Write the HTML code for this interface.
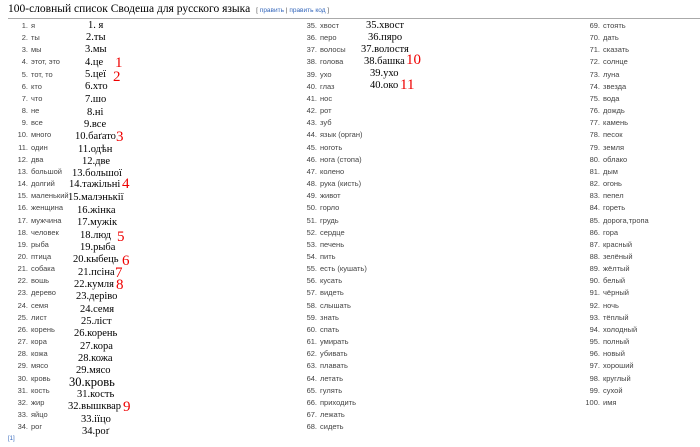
<!DOCTYPE html>
<html><head><meta charset="utf-8"><style>
body{margin:0;width:700px;height:447px;background:#fff;position:relative;overflow:hidden;font-family:"Liberation Sans",sans-serif}
h2{position:absolute;left:8px;top:3px;margin:0;font:11.5px "Liberation Serif",serif;color:#000;white-space:nowrap}
h2 span{font:6.5px "Liberation Sans",sans-serif;color:#555;margin-left:6px}
h2 span a{color:#3366bb}
.rule{position:absolute;left:8px;right:0;top:18px;height:1px;background:#aaa}
.l{position:absolute;font-size:7.5px;color:#444;line-height:12.15px;white-space:nowrap}
.l b{font-weight:normal;display:inline-block;text-align:right;margin-right:3px}
.h{position:absolute;font:10.5px "Liberation Serif",serif;color:#000;line-height:14px;white-space:nowrap}
.r{position:absolute;font:15px "Liberation Serif",serif;color:#e00;line-height:14px}
.f{position:absolute;left:8px;top:436px;font-size:6px;color:#3366bb}
</style></head><body>
<h2>100-словный список Сводеша для русского языка<span>[ <a>править</a> | <a>править код</a> ]</span></h2>
<div class="rule"></div>
<div class="l" style="left:10px;top:20px">
<div><b style="width:18px">1.</b>я</div><div><b style="width:18px">2.</b>ты</div><div><b style="width:18px">3.</b>мы</div><div><b style="width:18px">4.</b>этот, это</div><div><b style="width:18px">5.</b>тот, то</div><div><b style="width:18px">6.</b>кто</div><div><b style="width:18px">7.</b>что</div><div><b style="width:18px">8.</b>не</div><div><b style="width:18px">9.</b>все</div><div><b style="width:18px">10.</b>много</div><div><b style="width:18px">11.</b>один</div><div><b style="width:18px">12.</b>два</div><div><b style="width:18px">13.</b>большой</div><div><b style="width:18px">14.</b>долгий</div><div><b style="width:18px">15.</b>маленький</div><div><b style="width:18px">16.</b>женщина</div><div><b style="width:18px">17.</b>мужчина</div><div><b style="width:18px">18.</b>человек</div><div><b style="width:18px">19.</b>рыба</div><div><b style="width:18px">20.</b>птица</div><div><b style="width:18px">21.</b>собака</div><div><b style="width:18px">22.</b>вошь</div><div><b style="width:18px">23.</b>дерево</div><div><b style="width:18px">24.</b>семя</div><div><b style="width:18px">25.</b>лист</div><div><b style="width:18px">26.</b>корень</div><div><b style="width:18px">27.</b>кора</div><div><b style="width:18px">28.</b>кожа</div><div><b style="width:18px">29.</b>мясо</div><div><b style="width:18px">30.</b>кровь</div><div><b style="width:18px">31.</b>кость</div><div><b style="width:18px">32.</b>жир</div><div><b style="width:18px">33.</b>яйцо</div><div><b style="width:18px">34.</b>рог</div>
</div>
<div class="l" style="left:295px;top:20px">
<div><b style="width:22px">35.</b>хвост</div><div><b style="width:22px">36.</b>перо</div><div><b style="width:22px">37.</b>волосы</div><div><b style="width:22px">38.</b>голова</div><div><b style="width:22px">39.</b>ухо</div><div><b style="width:22px">40.</b>глаз</div><div><b style="width:22px">41.</b>нос</div><div><b style="width:22px">42.</b>рот</div><div><b style="width:22px">43.</b>зуб</div><div><b style="width:22px">44.</b>язык (орган)</div><div><b style="width:22px">45.</b>ноготь</div><div><b style="width:22px">46.</b>нога (стопа)</div><div><b style="width:22px">47.</b>колено</div><div><b style="width:22px">48.</b>рука (кисть)</div><div><b style="width:22px">49.</b>живот</div><div><b style="width:22px">50.</b>горло</div><div><b style="width:22px">51.</b>грудь</div><div><b style="width:22px">52.</b>сердце</div><div><b style="width:22px">53.</b>печень</div><div><b style="width:22px">54.</b>пить</div><div><b style="width:22px">55.</b>есть (кушать)</div><div><b style="width:22px">56.</b>кусать</div><div><b style="width:22px">57.</b>видеть</div><div><b style="width:22px">58.</b>слышать</div><div><b style="width:22px">59.</b>знать</div><div><b style="width:22px">60.</b>спать</div><div><b style="width:22px">61.</b>умирать</div><div><b style="width:22px">62.</b>убивать</div><div><b style="width:22px">63.</b>плавать</div><div><b style="width:22px">64.</b>летать</div><div><b style="width:22px">65.</b>гулять</div><div><b style="width:22px">66.</b>приходить</div><div><b style="width:22px">67.</b>лежать</div><div><b style="width:22px">68.</b>сидеть</div>
</div>
<div class="l" style="left:578px;top:20px">
<div><b style="width:22px">69.</b>стоять</div><div><b style="width:22px">70.</b>дать</div><div><b style="width:22px">71.</b>сказать</div><div><b style="width:22px">72.</b>солнце</div><div><b style="width:22px">73.</b>луна</div><div><b style="width:22px">74.</b>звезда</div><div><b style="width:22px">75.</b>вода</div><div><b style="width:22px">76.</b>дождь</div><div><b style="width:22px">77.</b>камень</div><div><b style="width:22px">78.</b>песок</div><div><b style="width:22px">79.</b>земля</div><div><b style="width:22px">80.</b>облако</div><div><b style="width:22px">81.</b>дым</div><div><b style="width:22px">82.</b>огонь</div><div><b style="width:22px">83.</b>пепел</div><div><b style="width:22px">84.</b>гореть</div><div><b style="width:22px">85.</b>дорога,тропа</div><div><b style="width:22px">86.</b>гора</div><div><b style="width:22px">87.</b>красный</div><div><b style="width:22px">88.</b>зелёный</div><div><b style="width:22px">89.</b>жёлтый</div><div><b style="width:22px">90.</b>белый</div><div><b style="width:22px">91.</b>чёрный</div><div><b style="width:22px">92.</b>ночь</div><div><b style="width:22px">93.</b>тёплый</div><div><b style="width:22px">94.</b>холодный</div><div><b style="width:22px">95.</b>полный</div><div><b style="width:22px">96.</b>новый</div><div><b style="width:22px">97.</b>хороший</div><div><b style="width:22px">98.</b>круглый</div><div><b style="width:22px">99.</b>сухой</div><div><b style="width:22px">100.</b>имя</div>
</div>
<div class="h" style="left:88px;top:19px">1. я</div>
<div class="h" style="left:86px;top:31px">2.ты</div>
<div class="h" style="left:85px;top:43px">3.мы</div>
<div class="h" style="left:85px;top:56px">4.це</div>
<div class="h" style="left:85px;top:68px">5.цеї</div>
<div class="h" style="left:85px;top:80px">6.хто</div>
<div class="h" style="left:85px;top:93px">7.шо</div>
<div class="h" style="left:87px;top:106px">8.ні</div>
<div class="h" style="left:84px;top:118px">9.все</div>
<div class="h" style="left:75px;top:130px">10.баґато</div>
<div class="h" style="left:78px;top:143px">11.одѣн</div>
<div class="h" style="left:82px;top:155px">12.две</div>
<div class="h" style="left:72px;top:167px">13.большої</div>
<div class="h" style="left:69px;top:178px">14.тажільні</div>
<div class="h" style="left:68px;top:191px">15.малэнькії</div>
<div class="h" style="left:77px;top:204px">16.жінка</div>
<div class="h" style="left:77px;top:216px">17.мужік</div>
<div class="h" style="left:80px;top:229px">18.люд</div>
<div class="h" style="left:80px;top:241px">19.рыба</div>
<div class="h" style="left:73px;top:253px">20.кыбець</div>
<div class="h" style="left:78px;top:266px">21.псіна</div>
<div class="h" style="left:74px;top:278px">22.кумля</div>
<div class="h" style="left:76px;top:290px">23.деріво</div>
<div class="h" style="left:80px;top:303px">24.семя</div>
<div class="h" style="left:81px;top:315px">25.ліст</div>
<div class="h" style="left:74px;top:327px">26.корень</div>
<div class="h" style="left:80px;top:340px">27.кора</div>
<div class="h" style="left:78px;top:352px">28.кожа</div>
<div class="h" style="left:76px;top:364px">29.мясо</div>
<div class="h" style="left:69px;top:375px;font-size:12.5px">30.кровь</div>
<div class="h" style="left:77px;top:388px">31.кость</div>
<div class="h" style="left:68px;top:400px">32.вышквар</div>
<div class="h" style="left:81px;top:413px">33.іїцо</div>
<div class="h" style="left:82px;top:425px">34.роґ</div>
<div class="h" style="left:366px;top:19px">35.хвост</div>
<div class="h" style="left:368px;top:31px">36.пяро</div>
<div class="h" style="left:361px;top:43px">37.волостя</div>
<div class="h" style="left:364px;top:55px">38.башка</div>
<div class="h" style="left:370px;top:67px">39.ухо</div>
<div class="h" style="left:370px;top:79px">40.око</div>
<div class="r" style="left:115px;top:56px">1</div>
<div class="r" style="left:113px;top:70px">2</div>
<div class="r" style="left:116px;top:130px">3</div>
<div class="r" style="left:122px;top:177px">4</div>
<div class="r" style="left:117px;top:230px">5</div>
<div class="r" style="left:122px;top:254px">6</div>
<div class="r" style="left:115px;top:266px">7</div>
<div class="r" style="left:116px;top:278px">8</div>
<div class="r" style="left:123px;top:400px">9</div>
<div class="r" style="left:406px;top:53px">10</div>
<div class="r" style="left:400px;top:78px">11</div>
<div class="f">[1]</div>
</body></html>
